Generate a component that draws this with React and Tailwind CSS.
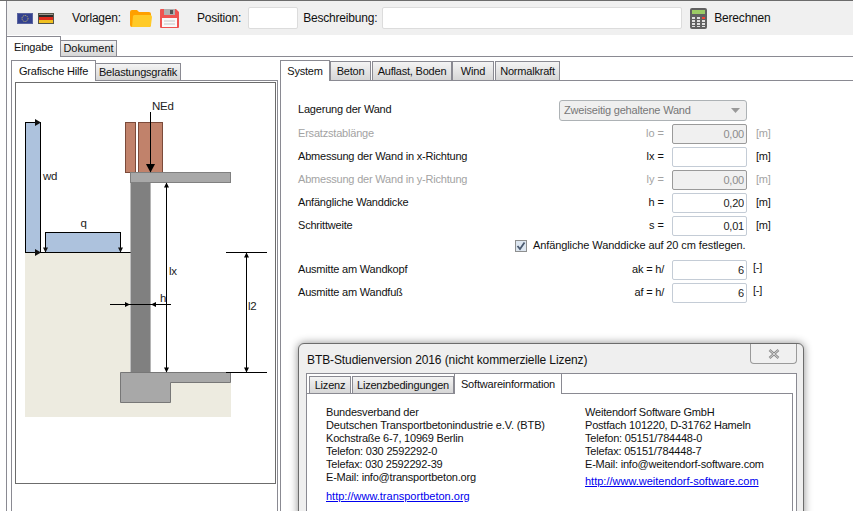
import React from "react";

const formRows = [
  { label: "Ersatzstablänge", sym: "lo =", value: "0,00", unit: "[m]", off: true },
  { label: "Abmessung der Wand in x-Richtung", sym: "lx =", value: "", unit: "[m]" },
  { label: "Abmessung der Wand in y-Richtung", sym: "ly =", value: "0,00", unit: "[m]", off: true },
  { label: "Anfängliche Wanddicke", sym: "h =", value: "0,20", unit: "[m]" },
  { label: "Schrittweite", sym: "s =", value: "0,01", unit: "[m]" },
];

const Tab = ({ label, active, className }) => (
  <div
    className={
      active
        ? "flex justify-center items-start bg-white border border-b-0 border-[#8a8a92] pt-[2px] mb-[-1px] relative z-10 " + className
        : "flex justify-center items-center bg-linear-to-b from-[#f4f4f4] to-[#d6d6d6] border border-b-0 border-[#8a8a92] " + className
    }
  >
    {label}
  </div>
);

const FormRow = ({ row }) => (
  <div className={"flex items-center h-[23px]" + (row.off ? " text-[#a3a3a3]" : " text-[#111]")}>
    <div className="w-[310px]">{row.label}</div>
    <div className="w-[56px] text-right tracking-normal">{row.sym}</div>
    <input
      readOnly
      value={row.value}
      className={
        "ml-[8px] w-[75px] h-[20px] rounded-[2px] border text-right pr-[2px] outline-none " +
        (row.off ? "bg-[#f0f0f0] border-[#9a9a9a] text-[#8c8c8c]" : "bg-white border-[#c4ccd6] text-[#222]")
      }
    />
    <div className="ml-[9px]">{row.unit}</div>
  </div>
);

const EuFlag = () => (
  <svg width="16" height="11" viewBox="0 0 16 11">
    <rect width="16" height="11" fill="#33418f" />
    <rect x="0.5" y="0.5" width="15" height="10" fill="none" stroke="#5a649f" />
    <circle cx="8" cy="5.5" r="3" fill="none" stroke="#d8c766" strokeWidth="1" strokeDasharray="1 1" />
  </svg>
);

const DeFlag = () => (
  <svg width="16" height="11" viewBox="0 0 16 11">
    <rect width="16" height="11" fill="#55554b" />
    <rect x="1" y="1" width="14" height="1" fill="#9a988c" />
    <rect x="1" y="2" width="14" height="2" fill="#2c2c2a" />
    <rect x="1" y="4" width="14" height="3" fill="#dd2a1c" />
    <rect x="1" y="7" width="14" height="3" fill="#f0c020" />
  </svg>
);

const FolderIcon = () => (
  <svg width="22" height="17" viewBox="0 0 22 17">
    <path d="M0 2a2 2 0 0 1 2-2h5l2 2h10a2 2 0 0 1 2 2v11a2 2 0 0 1-2 2H2a2 2 0 0 1-2-2z" fill="#ffa000" />
    <path d="M3 6a2 2 0 0 1 2-1h15a2 2 0 0 1 2 2l-1 8a2 2 0 0 1-2 2H2z" fill="#ffca28" />
  </svg>
);

const SaveIcon = () => (
  <svg width="19" height="19" viewBox="0 0 19 19">
    <path d="M1 0h15l3 3v15a1 1 0 0 1-1 1H1a1 1 0 0 1-1-1V1a1 1 0 0 1 1-1z" fill="#ef5350" />
    <rect x="4" y="0" width="11" height="6" fill="#b0b0b0" />
    <rect x="10" y="1" width="3" height="4" fill="#555" />
    <rect x="2" y="9" width="15" height="9" fill="#fafafa" />
    <path d="M4 12h11M4 15h11" stroke="#c4c4c4" strokeWidth="1" />
  </svg>
);

const CalcIcon = () => (
  <svg width="17" height="21" viewBox="0 0 17 21">
    <rect width="17" height="21" rx="2" fill="#616161" />
    <rect x="2" y="2" width="13" height="4" fill="#9ccc65" />
    <path d="M2 9h3v2H2zM7 9h3v2H7zM2 12h3v2H2zM7 12h3v2H7zM12 12h3v2h-3zM2 15h3v2H2zM7 15h3v2H7zM12 15h3v2h-3zM2 18h3v1H2zM7 18h3v1H7zM12 18h3v1h-3z" fill="#e0e0e0" />
    <rect x="12" y="9" width="3" height="2" fill="#f44336" />
  </svg>
);

// drawn in page coordinates so the numbers can be read off the screenshot
const WallDiagram = () => (
  <svg width="259" height="400" viewBox="16 83 259 400" className="block">
    <rect x="25" y="252" width="105" height="165" fill="#edebe0" />
    <rect x="120" y="372" width="111" height="45" fill="#edebe0" />

    <rect x="25.5" y="122.5" width="15" height="130" fill="#adc2dd" stroke="#000" />
    <rect x="45.5" y="232.5" width="75" height="20" fill="#adc2dd" stroke="#000" />
    <path d="M25 252.5H131" stroke="#000" />
    <path d="M35 119l6 3.5-6 3.5zM35 249l6 3.5-6 3.5z" fill="#111" />
    <path d="M43 247.5h5l-2.5 5zM118 247.5h5l-2.5 5z" fill="#111" />

    <rect x="130.5" y="183" width="20" height="189" fill="#808080" />
    <path d="M150.5 183V372" stroke="#b4b4b4" />
    <rect x="125.5" y="122.5" width="10" height="50" fill="#c1826b" stroke="#7b4a3a" />
    <rect x="138.5" y="122.5" width="24" height="50" fill="#c1826b" stroke="#7b4a3a" />
    <rect x="130.5" y="172.5" width="100" height="10" fill="#a8a8a8" stroke="#808080" />
    <path d="M120.5 372.5H230.5V382.5H170.5V402.5H120.5Z" fill="#a8a8a8" stroke="#777" />

    <path d="M150.5 112V172" stroke="#000" />
    <path d="M146 164h9l-4.5 8.5z" fill="#000" />

    <path d="M166.5 183V372" stroke="#000" />
    <path d="M164 187.500l2.500-5 2.500 5zM164 367.500l2.500 5 2.500-5z" fill="#000" />

    <path d="M226 252.500H267M226 372.500H267M246.500 252V372" stroke="#000" />
    <path d="M244 257.500l2.500-5 2.500 5zM244 367.500l2.500 5 2.500-5z" fill="#000" />

    <path d="M110 304.500H171" stroke="#000" />
    <path d="M125 302l5 2.500-5 2.500zM156 302l-5 2.500 5 2.500z" fill="#000" />

    <g fontFamily="Liberation Sans" fontSize="11.5" fill="#222">
      <text x="152" y="110">NEd</text>
      <text x="43" y="180">wd</text>
      <text x="80.500" y="227">q</text>
      <text x="169" y="275">lx</text>
      <text x="160" y="302">h</text>
      <text x="248" y="310">l2</text>
    </g>
  </svg>
);

const LicenseDialog = () => (
  <div className="absolute left-[298px] top-[342px] w-[506px] h-[190px] flex flex-col rounded-t-[6px] border border-[#6c6c6c] bg-[#efefef] shadow-[0_0_8px_rgba(0,0,0,0.45)] z-20">
    <div className="flex h-[29px] shrink-0 justify-between pl-[8px]">
      <div className="text-[#111] text-[12px] tracking-[-0.1px] pt-[7px]">BTB-Studienversion 2016 (nicht kommerzielle Lizenz)</div>
      <div className="flex justify-center items-center w-[47px] h-[20px] mr-[6px] border border-t-0 border-[#9a9a9a] rounded-b-[4px] bg-[#f0f0f0]">
        <svg width="12" height="10" viewBox="0 0 12 10">
          <path d="M1.500 1l9 8M10.500 1l-9 8" stroke="#8a8a8a" strokeWidth="2.500" />
          <path d="M1.500 1l9 8M10.500 1l-9 8" stroke="#e8e8e8" strokeWidth="0.800" />
        </svg>
      </div>
    </div>
    <div className="flex flex-col flex-1 ml-[7px] mr-[6px] bg-white border border-b-0 border-[#8a8a92]">
      <div className="flex items-end h-[20px] shrink-0 pl-[1px] border-b border-[#8a8a92] mr-[3px]">
        <Tab label="Lizenz" className="w-[42px] h-[17px] ml-[1px]" />
        <Tab label="Lizenzbedingungen" className="w-[102px] h-[17px] ml-[1px]" />
        <Tab label="Softwareinformation" active className="w-[108px] h-[21px]" />
      </div>
      <div className="flex flex-1 mr-[3px] border-r border-[#8a8a92] text-[#111] leading-[13px] pt-[12px] pl-[19px]">
        <div className="w-[259px]">
          <div>Bundesverband der</div>
          <div className="tracking-[-0.13px]">Deutschen Transportbetonindustrie e.V. (BTB)</div>
          <div>Kochstraße 6-7, 10969 Berlin</div>
          <div>Telefon: 030 2592292-0</div>
          <div>Telefax: 030 2592292-39</div>
          <div>E-Mail: info@transportbeton.org</div>
          <div className="mt-[6px] text-[#0000ee] underline tracking-normal">http://www.transportbeton.org</div>
        </div>
        <div>
          <div>Weitendorf Software GmbH</div>
          <div>Postfach 101220, D-31762 Hameln</div>
          <div>Telefon: 05151/784448-0</div>
          <div>Telefax: 05151/784448-7</div>
          <div>E-Mail: info@weitendorf-software.com</div>
          <div className="mt-[4px] text-[#0000ee] underline tracking-normal">http://www.weitendorf-software.com</div>
        </div>
      </div>
    </div>
  </div>
);

const App = () => {
  return (
    <div className="relative w-[853px] h-[511px] overflow-hidden bg-white border-t border-[#6c6c6c] pl-[6px] text-[11px] tracking-[-0.2px] text-[#111] font-['Liberation_Sans',sans-serif]">
      <div className="flex flex-col h-full border-l border-[#8a8a92]">
        {/* Toolbar */}
        <div className="flex items-center h-[34px] shrink-0 bg-[#f0f0f0] pl-[10px]">
          <EuFlag />
          <div className="ml-[5px]"><DeFlag /></div>
          <span className="ml-[18px] text-[12px]">Vorlagen:</span>
          <div className="ml-[9px]"><FolderIcon /></div>
          <div className="ml-[8px]"><SaveIcon /></div>
          <span className="ml-[18px] text-[12px]">Position:</span>
          <input readOnly className="ml-[7px] w-[50px] h-[22px] bg-white border border-[#dcdcdc] rounded-[2px]" />
          <span className="ml-[5px] text-[12px]">Beschreibung:</span>
          <input readOnly className="ml-[5px] w-[300px] h-[22px] bg-white border border-[#dcdcdc] rounded-[2px]" />
          <div className="ml-[8px] flex"><CalcIcon /></div>
          <span className="ml-[7px] text-[12px]">Berechnen</span>
        </div>

        {/* Main tabs */}
        <div className="flex items-end h-[22px] shrink-0 border-b border-[#8a8a92]">
          <Tab label="Eingabe" active className="w-[55px] h-[21px] ml-[-1px]" />
          <Tab label="Dokument" className="w-[57px] h-[16px] ml-[-1px] tracking-normal" />
        </div>

        <div className="flex flex-1 min-h-0 pl-[4px] pt-[3px]">
          {/* Left side */}
          <div className="flex flex-col w-[267px] h-full">
            <div className="flex items-end h-[21px] shrink-0 border-b border-[#8a8a92]">
              <Tab label="Grafische Hilfe" active className="w-[85px] h-[21px]" />
              <Tab label="Belastungsgrafik" className="w-[86px] h-[17px] ml-[-1px]" />
            </div>
            <div className="flex-1 border-x border-[#8a8a92] pl-[3px] pt-[1px]">
              <div className="w-[261px] h-[402px] border border-[#6c6c6c] overflow-hidden">
                <WallDiagram />
              </div>
            </div>
          </div>

          {/* Right side */}
          <div className="flex flex-col flex-1 ml-[2px] h-full">
            <div className="flex items-end h-[21px] shrink-0 border-b border-[#8a8a92]">
              <Tab label="System" active className="w-[50px] h-[21px]" />
              <Tab label="Beton" className="w-[41px] h-[19px]" />
              <Tab label="Auflast, Boden" className="w-[80px] h-[19px] ml-[1px]" />
              <Tab label="Wind" className="w-[42px] h-[19px]" />
              <Tab label="Normalkraft" className="w-[65px] h-[19px] ml-[1px]" />
            </div>
            <div className="flex-1 border-l border-[#8a8a92] pl-[17px] pt-[17px]">
              <div className="flex items-center h-[24px]">
                <div className="w-[261px] pb-[2px]">Lagerung der Wand</div>
                <div className="flex items-center justify-between w-[188px] h-[21px] px-[4px] pt-[1px] rounded-[3px] border border-[#adb2b5] bg-[#efefef] text-[#777]">
                  Zweiseitig gehaltene Wand
                  <svg width="9" height="5" viewBox="0 0 9 5" className="mr-[2px]">
                    <path d="M0 0h9L4.500 5z" fill="#999" />
                  </svg>
                </div>
              </div>
              {formRows.map((row, index) => (
                <FormRow key={index} row={row} />
              ))}
              <div className="flex items-center h-[17px] mb-[4px] pl-[217px]">
                <div className="flex items-center justify-center w-[12px] h-[12px] border border-[#8e8f8f] bg-[#dde6f0]">
                  <svg width="10" height="10" viewBox="0 0 10 10">
                    <path d="M1.500 5l2.500 3 4.500-6.500" fill="none" stroke="#4a5a70" strokeWidth="1.800" />
                  </svg>
                </div>
                <span className="ml-[6px] tracking-[-0.1px]">Anfängliche Wanddicke auf 20 cm festlegen.</span>
              </div>
              {[
                { label: "Ausmitte am Wandkopf", sym: "ak = h/" },
                { label: "Ausmitte am Wandfuß", sym: "af = h/" },
              ].map((row, index) => (
                <div key={index} className="flex items-center h-[23px]">
                  <div className="w-[310px]">{row.label}</div>
                  <div className="w-[56px] text-right">{row.sym}</div>
                  <input readOnly value="6" className="ml-[8px] w-[75px] h-[20px] rounded-[2px] border bg-white border-[#c4ccd6] text-[#222] text-right pr-[2px] outline-none" />
                  <div className="ml-[6px] mt-[-4px]">[-]</div>
                </div>
              ))}
            </div>
          </div>
        </div>
      </div>
      <LicenseDialog />
    </div>
  );
};

export default App;
